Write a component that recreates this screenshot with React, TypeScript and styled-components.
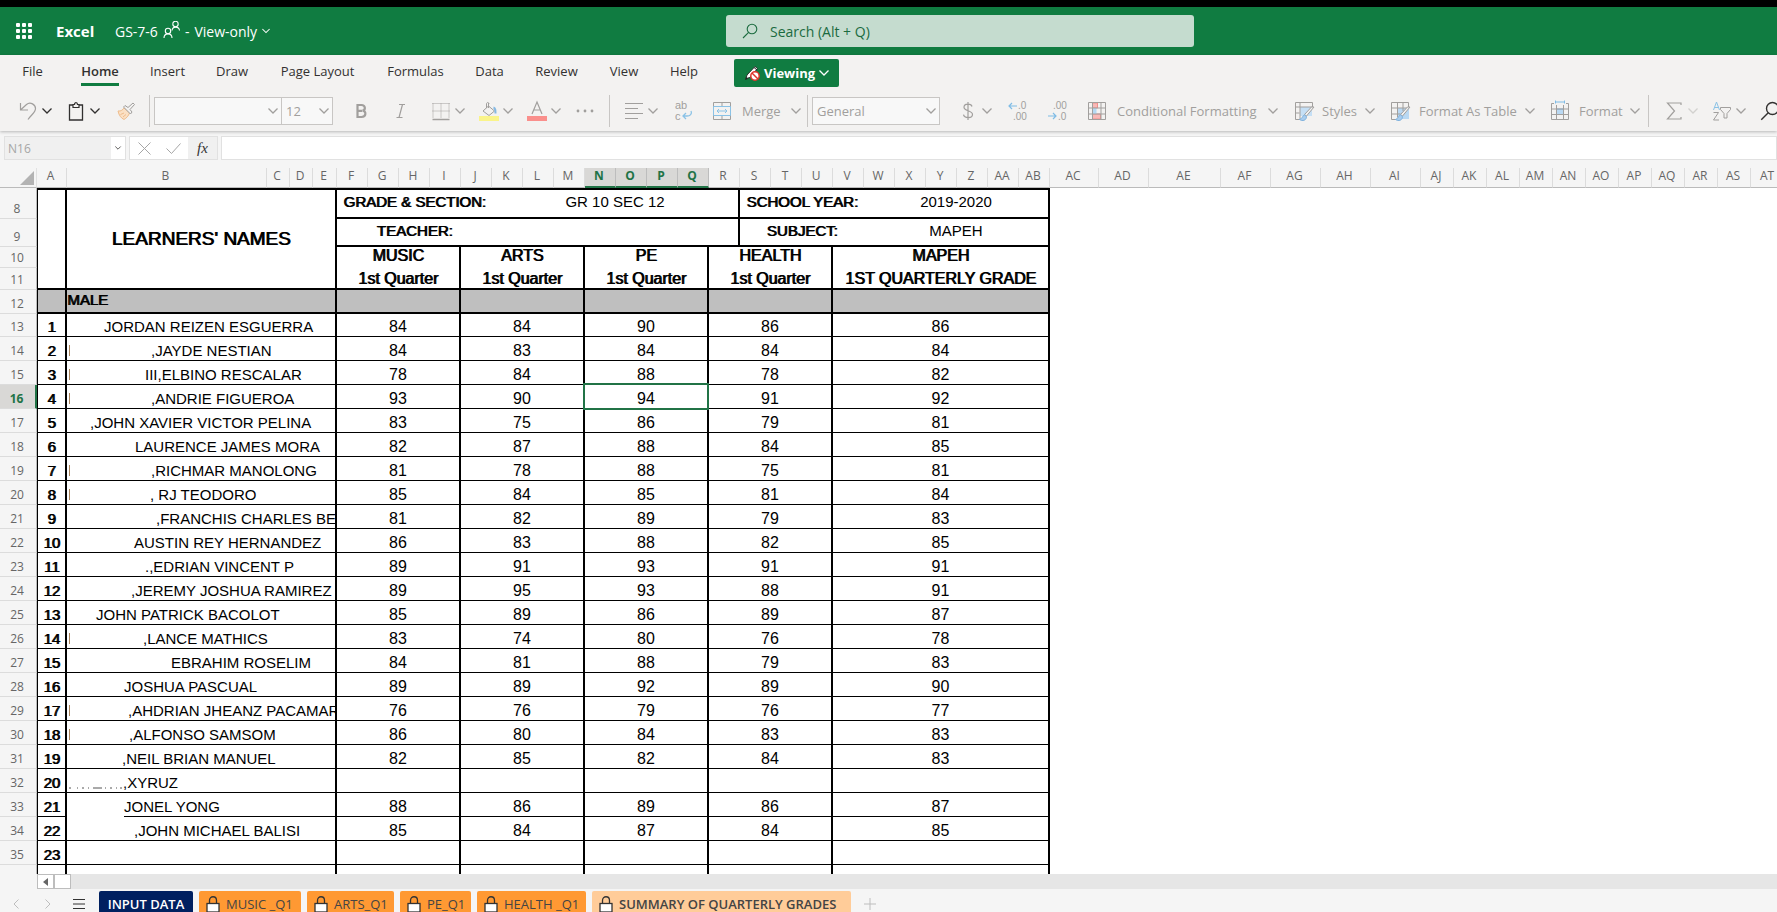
import React from 'react';
import styled, { createGlobalStyle, css } from 'styled-components';

const ui = '"Open Sans", "Noto Sans", sans-serif';
const sheet = '"Liberation Sans", Arial, sans-serif';
const green = '#107c41';
const selectGreen = '#217346';
const dim = '#a19f9d';

const GlobalStyle = createGlobalStyle`
  * { box-sizing: border-box; }
  body { margin: 0; background: #fff; font-family: ${ui}; font-size: 13px; overflow: hidden; }
  button, input, select { font: inherit; color: inherit; margin: 0; padding: 0; border: 0; background: none; border-radius: 0; }
  svg { display: block; flex: none; overflow: visible; }
`;

const Page = styled.div`
  display: flex;
  flex-direction: column;
  height: 100vh;
  overflow: hidden;
  background: #f5f5f5;
`;

/* ---------- title bar ---------- */

const TitleBar = styled.header`
  display: flex;
  flex: none;
  align-items: center;
  height: 55px;
  border-top: 7px solid #000;
  background: ${green};
  color: #fff;
  font-size: 14px;
`;

const TitleLeft = styled.div`
  display: flex;
  flex: 0 1 726px;
  align-items: center;
  white-space: nowrap;
  overflow: hidden;
`;

const Launcher = styled.button`
  display: flex;
  justify-content: center;
  width: 47px;
`;

const AppName = styled.span`
  width: 59px;
  padding-left: 9px;
  margin-right: 9px;
  font-size: 15px;
  font-weight: 700;
`;

const DocName = styled.button`
  display: flex;
  align-items: center;
  gap: 5px;
`;

const SearchBox = styled.label`
  display: flex;
  flex: 0 1 468px;
  align-items: center;
  gap: 12px;
  height: 32px;
  padding: 0 16px;
  border-radius: 3px;
  background: #c5dccf;
  color: #1b6b3f;
`;

const SearchInput = styled.input`
  flex: 1;
  min-width: 0;
  outline: 0;
  &::placeholder { color: #1b6b3f; opacity: 1; }
`;

/* ---------- ribbon ---------- */

const Ribbon = styled.div`
  flex: none;
  height: 76px;
  background: #f3f2f1;
  box-shadow: 0 1px 3px rgba(0, 0, 0, 0.25);
`;

const RibbonTabs = styled.nav`
  display: flex;
  align-items: center;
  height: 34px;
  color: #323130;
`;

const RibbonTab = styled.button<{ $w: number; $active?: boolean }>`
  display: flex;
  flex: none;
  justify-content: center;
  width: ${(p) => p.$w}px;
  height: 34px;
  span {
    height: 31px;
    padding-top: 7px;
    line-height: 18px;
    white-space: nowrap;
    border-bottom: 3px solid ${(p) => (p.$active ? green : 'transparent')};
    font-weight: ${(p) => (p.$active ? 600 : 400)};
  }
`;

const ViewingButton = styled.button`
  display: flex;
  flex: none;
  align-items: center;
  align-self: flex-start;
  gap: 4px;
  width: 105px;
  height: 28px;
  margin: 4px 0 0 20px;
  padding-left: 10px;
  border-radius: 2px;
  background: ${green};
  color: #fff;
  font-weight: 700;
`;

const Toolbar = styled.div`
  display: flex;
  align-items: center;
  height: 42px;
  padding-top: 2px;
  overflow: hidden;
  color: ${dim};
  white-space: nowrap;
`;

const Tool = styled.button<{ $ml: number; $gap?: number; $dark?: boolean }>`
  display: flex;
  flex: none;
  align-items: center;
  height: 32px;
  gap: ${(p) => p.$gap ?? 4}px;
  margin-left: ${(p) => p.$ml}px;
  color: ${(p) => (p.$dark ? '#323130' : dim)};
`;

const ToolLabel = styled.span<{ $w: number }>`
  width: ${(p) => p.$w}px;
  margin-right: 3px;
  text-align: left;
`;

const Divider = styled.span<{ $ml: number }>`
  flex: none;
  width: 1px;
  height: 32px;
  margin-left: ${(p) => p.$ml}px;
  background: #c8c6c4;
`;

const Picker = styled.span<{ $w: number; $ml: number }>`
  display: grid;
  flex: none;
  align-items: center;
  width: ${(p) => p.$w}px;
  height: 28px;
  margin-left: ${(p) => p.$ml}px;
  border: 1px solid #c8c6c4;
  background: #f8f8f8;
  > * { grid-area: 1 / 1; }
  > svg { justify-self: end; margin-right: 3px; pointer-events: none; }
`;

const PickerSelect = styled.select`
  appearance: none;
  width: 100%;
  height: 100%;
  padding-left: 4px;
  outline: 0;
`;

/* ---------- formula bar ---------- */

const FormulaRow = styled.div`
  display: flex;
  flex: none;
  gap: 3px;
  height: 37px;
  padding: 5px 0 8px 4px;
`;

const Framed = styled.div<{ $w?: number }>`
  display: flex;
  flex: ${(p) => (p.$w ? 'none' : '1')};
  width: ${(p) => (p.$w ? `${p.$w}px` : 'auto')};
  border: 1px solid #e1e1e1;
  background: #fff;
`;

const NameBox = styled.input`
  flex: 1;
  min-width: 0;
  padding: 0 3px;
  background: #f0f0f0;
  color: #a6a6a6;
  font-size: 12px;
  outline: 0;
`;

const BarButton = styled.button<{ $w: number; $shade?: boolean; $dark?: boolean }>`
  display: flex;
  align-items: center;
  justify-content: center;
  width: ${(p) => p.$w}px;
  color: ${(p) => (p.$dark ? '#323130' : '#a6a6a6')};
  background: ${(p) => (p.$shade ? '#f0f0f0' : '#fff')};
`;

const FxText = styled.i`
  color: #333;
  font-family: "Liberation Serif", serif;
  font-size: 15px;
`;

const FormulaInput = styled.input`
  flex: 1;
  min-width: 0;
  padding: 0 6px;
  outline: 0;
`;

/* ---------- grid ---------- */

const GridArea = styled.main`
  flex: 1;
  min-height: 0;
  overflow: hidden;
  background: linear-gradient(90deg, #f5f5f5 37px, #fff 37px);
`;

const Grid = styled.table`
  table-layout: fixed;
  width: 100%;
  min-width: 1784px;
  border-collapse: separate;
  border-spacing: 0;
  font-family: ${sheet};
  color: #000;
  td, th { padding: 0; }
`;

const Corner = styled.th`
  height: 20px;
  background: #f5f5f5;
  border-bottom: 1px solid #bbb;
  border-right: 1px solid #e1e1e1;
  svg { margin: 0 2px 0 auto; }
`;

const ColHead = styled.th<{ $sel?: boolean }>`
  height: 20px;
  border-right: 1px solid ${(p) => (p.$sel ? '#bdbdbd' : '#dcdcdc')};
  border-bottom: ${(p) => (p.$sel ? `2px solid ${selectGreen}` : '1px solid #bbb')};
  background: ${(p) => (p.$sel ? '#d9d8d6' : '#f5f5f5')};
  color: ${(p) => (p.$sel ? selectGreen : '#666')};
  font: ${(p) => (p.$sel ? 700 : 400)} 12px/16px ${ui};
  text-align: center;
  vertical-align: top;
  white-space: nowrap;
  && { padding-right: 2px; }
`;

/* The last column takes the rest of the window; its letter stays at the left. */
const LastLetter = styled.span`
  display: block;
  width: 32px;
`;

const RowHead = styled.th<{ $sel?: boolean }>`
  border-right: ${(p) => (p.$sel ? `2px solid ${selectGreen}` : '1px solid #bbb')};
  border-bottom: 1px solid #dcdcdc;
  background: ${(p) => (p.$sel ? '#d9d8d6' : '#f5f5f5')};
  color: ${(p) => (p.$sel ? selectGreen : '#666')};
  font: ${(p) => (p.$sel ? 700 : 400)} 12px/18px ${ui};
  text-align: center;
  vertical-align: bottom;
  && { padding-right: 2px; }
`;

const Row = styled.tr<{ $h: number }>`
  height: ${(p) => p.$h}px;
`;

type CellProps = {
  $line?: number;
  $right?: number;
  $top?: number;
  $left?: number;
  $heavy?: boolean;
  $size?: number;
  $middle?: boolean;
  $raised?: boolean;
  $shade?: boolean;
  $start?: boolean;
  $sel?: boolean;
};

const Cell = styled.td<CellProps>`
  position: relative;
  border: 0 solid #000;
  border-top-width: ${(p) => p.$top ?? 0}px;
  border-left-width: ${(p) => p.$left ?? 0}px;
  border-right-width: ${(p) => p.$right ?? 2}px;
  border-bottom-width: ${(p) => p.$line ?? 1}px;
  background: ${(p) => (p.$shade ? '#bfbfbf' : '#fff')};
  font-size: ${(p) => p.$size ?? 16}px;
  line-height: 18px;
  text-align: ${(p) => (p.$start ? 'left' : 'center')};
  vertical-align: ${(p) => (p.$middle || p.$raised ? 'middle' : 'bottom')};
  white-space: nowrap;
  ${(p) => p.$raised && css`&& { padding-bottom: 3px; }`}
  ${(p) => p.$heavy && css`text-shadow: 1px 0 0 #000;`}
  ${(p) =>
    p.$sel &&
    css`
      &::after {
        content: '';
        position: absolute;
        inset: -2px;
        z-index: 1;
        border: 2px solid ${selectGreen};
      }
    `}
`;

const NameText = styled.div<{ $indent: number }>`
  display: flex;
  height: 18px;
  overflow: hidden;
  span { margin-left: ${(p) => p.$indent}px; }
`;

const Mark = styled.i`
  flex: none;
  width: 1px;
  height: 11px;
  margin: 3px -3px 0 2px;
  background: #a9835c;
`;

/* Leftover baseline strokes in front of the name in row 32. */
const Strokes = styled.svg`
  position: absolute;
  left: 2px;
  bottom: 3px;
`;

/* Gap in the rule under row 33. */
const RuleGap = styled.i`
  position: absolute;
  left: 0;
  bottom: -1px;
  width: 57px;
  height: 1px;
  background: #fff;
`;

const Blank = styled.td``;

/* ---------- bottom bars ---------- */

const ScrollRow = styled.div`
  display: flex;
  flex: none;
  height: 15px;
  margin-left: 37px;
  background: #e6e6e6;
`;

const ScrollPart = styled.button`
  display: flex;
  align-items: center;
  justify-content: center;
  width: 17px;
  border: 1px solid #bdbdbd;
  background: #fff;
`;

const SheetTabs = styled.footer`
  display: flex;
  flex: none;
  gap: 6px;
  height: 23px;
  padding-top: 2px;
  overflow: hidden;
`;

const NavGroup = styled.div`
  display: flex;
  flex: none;
  align-items: center;
  width: 93px;
  height: 26px;
`;

const NavButton = styled.button<{ $w: number; $dark?: boolean }>`
  display: flex;
  justify-content: center;
  width: ${(p) => p.$w}px;
  color: ${(p) => (p.$dark ? '#333' : '#bdbdbd')};
`;

const SheetTab = styled.button<{ $w: number; $bg: string; $fg: string; $bold?: boolean; $locked?: boolean }>`
  display: flex;
  flex: none;
  align-items: center;
  justify-content: ${(p) => (p.$locked ? 'flex-start' : 'center')};
  gap: 6px;
  width: ${(p) => p.$w}px;
  height: 26px;
  padding-left: ${(p) => (p.$locked ? 7 : 0)}px;
  border-radius: 2px 2px 0 0;
  background: ${(p) => p.$bg};
  color: ${(p) => p.$fg};
  font-weight: ${(p) => (p.$bold ? 600 : 400)};
  white-space: nowrap;
`;

/* ---------- icons ---------- */

const Chevron = ({ w = 10, faint = false, dark = false }: { w?: number; faint?: boolean; dark?: boolean }) => (
  <svg
    width={w}
    height="6"
    viewBox="0 0 10 6"
    fill="none"
    stroke={dark ? '#323130' : 'currentColor'}
    strokeWidth="1.3"
    opacity={faint ? 0.4 : 1}
  >
    <path d="M.5.5 5 5 9.500.5" />
  </svg>
);

const Icon = ({ children, size = 20 }: { children: React.ReactNode; size?: number }) => (
  <svg width={size} height={size} viewBox="0 0 20 20" fill="none" stroke="currentColor" strokeWidth="1">
    {children}
  </svg>
);

const Waffle = () => (
  <svg width="16" height="16" viewBox="0 0 16 16" fill="#fff">
    {[0, 6, 12].map((y) => [0, 6, 12].map((x) => <rect key={`${x}-${y}`} x={x} y={y} width="4" height="4" rx="1" />))}
  </svg>
);

const People = () => (
  <svg width="17" height="20" viewBox="0 0 17 20" fill="none" stroke="#fff" strokeWidth="1.1">
    <circle cx="5" cy="10" r="2.7" />
    <path d="M1 17c0-5.500 8-5.500 8 0" />
    <circle cx="12.500" cy="3" r="2.7" />
    <path d="M9 9.500c.5-4.500 7-4.500 7.500 0" />
  </svg>
);

const Magnifier = ({ size = 16 }: { size?: number }) => (
  <svg width={size} height={size} viewBox="0 0 16 16" fill="none" stroke="currentColor" strokeWidth="1.1">
    <circle cx="10" cy="6" r="4.8" />
    <path d="M6.600 9.400 1 15" />
  </svg>
);

const PencilOff = () => (
  <svg width="16" height="16" viewBox="0 0 16 16" fill="none">
    <path d="M2 13.500 3 10l8-8.500 2.500 2L6 12.500z" fill="#fff" stroke="#222" strokeWidth=".9" />
    <path d="M1 15 2 12l2 2z" fill="#222" />
    <path d="m10 2.500 3 2.500" stroke="#222" />
    <circle cx="11" cy="11" r="4.2" fill="#fff" stroke="#e0342b" strokeWidth="1.5" />
    <path d="m8 8 6 6" stroke="#e0342b" strokeWidth="1.5" />
  </svg>
);

const Lock = () => (
  <svg width="14" height="17" viewBox="0 0 14 17" fill="none" stroke="#333" strokeWidth="1.3">
    <path d="M3.500 7.500V4.500c0-5 7-5 7 0v3" />
    <rect x="1" y="7.5" width="12" height="8.5" fill="#fff" />
  </svg>
);

const brush = (
  <>
    <path d="m20 6-7.500 9-2-1.500L17.500 6z" fill="#f3f2f1" />
    <path d="M10.500 14c-2 0-1.500 3.500-5 4.500 3 2 7 1 7-3z" fill="#a9cdee" stroke="#7fb2de" />
  </>
);

const UndoIcon = () => <Icon><path d="M2.500 2v7H10M2.500 9l6-5.500c4-3.500 9 .5 9 4 0 4-4 6-7.500 11" strokeWidth="1.2" /></Icon>;
const ClipIcon = () => (
  <Icon><path d="M7 4H3.500v15h13V4H13" strokeWidth="1.3" /><path d="M7 6.500V3.500h1.500c0-2.600 3-2.600 3 0H13v3z" strokeWidth="1.2" /></Icon>
);
const PainterIcon = () => (
  <Icon>
    <path d="M2 10c3 .5 5-1.500 6-3l5.500 5c-1 3-3 5-5.500 6.500-3-1.500-5-4-6-8.500z" fill="#fbe0c4" stroke="#efbd8c" />
    <path d="M4.500 13.500 8 12M7 16l3-2.500" stroke="#efbd8c" />
    <path d="m7.500 6 1.500-1.500 3 2 5-4.500 1.500 1.500-4.500 5 2 2.500-1.500 2z" fill="#f3f2f1" />
  </Icon>
);
const BoldIcon = () => <Icon><path d="M6.500 4v12h4c5 0 5-6 1-6.300C15 9 14.500 4 10.500 4zM6.500 9.800h4.500" strokeWidth="2.2" /></Icon>;
const ItalicIcon = () => <Icon><path d="M8 3.500h6M5.500 16.500h6M11.500 3.500l-3.500 13" strokeWidth="1.2" /></Icon>;
const BordersIcon = () => (
  <Icon><path d="M1.500 2.500h17M1.500 10h17M2 2.500V17M10 2.500V17M18 2.500V17" strokeDasharray="1 1" /><path d="M1.500 18.500h17" strokeWidth="1.5" /></Icon>
);
const FillIcon = () => (
  <Icon>
    <path d="M0 17.500h20" stroke="#faf48a" strokeWidth="5" />
    <path d="M9.500 2v5M9.500 5l6 5-5.500 4.500L4 10z M7.500 7V3c0-2 2.500-2 2.500 0" />
    <path d="M14.500 6.500c2 .5 2 2.500 2 6" stroke="#86b9e3" strokeWidth="2" />
  </Icon>
);
const FontColorIcon = () => (
  <Icon><path d="M0 17.500h20" stroke="#fa8f8c" strokeWidth="5" /><path d="M5 13 10 1l5 12M6.700 9h6.600" strokeWidth="1.2" /></Icon>
);
const DotsIcon = () => (
  <Icon><g fill="currentColor" stroke="none"><circle cx="3" cy="10" r="1.4" /><circle cx="10" cy="10" r="1.4" /><circle cx="17" cy="10" r="1.4" /></g></Icon>
);
const AlignIcon = () => <Icon><path d="M1 2.500h18M1 7.500h13M1 12.500h18M1 17.500h13" strokeWidth="1.2" /></Icon>;
const WrapIcon = () => (
  <svg width="20" height="22" viewBox="0 0 20 22" fill="none">
    <text x="1" y="9" fill="currentColor" fontSize="11" fontFamily={sheet}>ab</text>
    <text x="1" y="20" fill="currentColor" fontSize="11" fontFamily={sheet}>c</text>
    <path d="M17 11c1.500 3-1 5-4 5H9m3-3-3 3 3 3" stroke="#8ac2e6" strokeWidth="1.3" />
  </svg>
);
const MergeIcon = () => (
  <Icon>
    <path d="M1.500 1.500h17v17h-17zM10 1.500v4M10 14.500v4" />
    <path d="M1.500 5.500h17v9h-17zM5 10h10M7 8l-2 2 2 2M13 8l2 2-2 2" stroke="#8ac2e6" />
  </Icon>
);
const DollarIcon = () => <Icon><path d="M10 1v18M14 5.500C13 2 6 2.500 6 6.200c0 4.300 8.500 2.800 8.500 7.300 0 4.200-8.300 4-9 .2" strokeWidth="1.2" /></Icon>;
const Decimals = ({ more }: { more?: boolean }) => (
  <svg width="20" height="22" viewBox="0 0 20 22" fill="none">
    <text x={more ? 10 : 5} y="9" fill="currentColor" fontSize="10" fontFamily={sheet}>{more ? '.0' : '.00'}</text>
    <text x={more ? 5 : 10} y="20" fill="currentColor" fontSize="10" fontFamily={sheet}>{more ? '.00' : '.0'}</text>
    <path d={more ? 'M9 6H1m3-3L1 6l3 3' : 'M0 16h8m-3-3 3 3-3 3'} stroke="#7fbce6" strokeWidth="1.2" />
  </svg>
);
const CondIcon = () => (
  <Icon>
    <path d="M5.500 2h5v5h-5zM5.500 13h8v5h-8z" fill="#f8b9b7" stroke="#f08f8c" />
    <path d="M5.500 7h4v6h-4z" fill="#b5d9f2" stroke="none" />
    <path d="M1.500 1.500h17v17h-17zM1.500 7h17M1.500 13h17M5.500 1.500v17M14 1.500v17" />
  </Icon>
);
const StylesIcon = () => (
  <Icon><path d="M6 6h12v9H6z" fill="#c5dff5" stroke="none" /><path d="M18.500 6V1.500h-17v17h5M1.500 6h17M6 1.500v17M1.500 12h4" />{brush}</Icon>
);
const TableIcon = () => (
  <Icon><path d="M8 7h11v11H8z" fill="#b9d8f2" stroke="none" /><path d="M18.500 6V1.500h-17v17h5M1.500 7h17M1.500 13h9M7.500 1.500v15M13 1.500V10" />{brush}</Icon>
);
const FormatIcon = () => (
  <Icon>
    <path d="M6.500 8h7v5.500h-7z" fill="#b9d8f2" stroke="#7fb2de" />
    <path d="M4 2.500H1.500v16h17v-16H16M1.500 8h17M1.500 13.500h17M6.500 4v14.500M13.500 4v14.500" />
    <path d="M5.500 1h9M5.500-.5v3M14.500-.5v3" stroke="#7fbce6" />
  </Icon>
);
const SumIcon = () => <Icon><path d="M17 4V2H3.500l7 8-7 8H17v-2" strokeWidth="1.2" /></Icon>;
const SortIcon = () => (
  <Icon>
    <path d="M1.500 9 4.500 1l3 8M2.500 6.500h4" stroke="#8ac2e6" />
    <path d="M1.500 11.500h5l-5 7.500h5.500M8.500 6.500h10v2l-3.500 4V17h-3v-4.500l-3.500-4z" />
  </Icon>
);

/* ---------- data ---------- */

const ribbonTabs: [string, number][] = [
  ['File', 65], ['Home', 70], ['Insert', 65], ['Draw', 64], ['Page Layout', 107],
  ['Formulas', 89], ['Data', 59], ['Review', 75], ['View', 60], ['Help', 60],
];

const columns: [string, number][] = [
  ['A', 30], ['B', 200], ['C', 23], ['D', 23], ['E', 24],
  ...'FGHIJKLMNOPQRSTUVWXYZ'.split('').map((c): [string, number] => [c, 31]),
  ['AA', 31], ['AB', 31], ['AC', 49], ['AD', 50], ['AE', 72],
  ['AF', 50], ['AG', 50], ['AH', 50], ['AI', 50],
  ...['AJ', 'AK', 'AL', 'AM', 'AN', 'AO', 'AP', 'AQ', 'AR', 'AS'].map((c): [string, number] => [c, 33]),
];

const subjects = ['MUSIC', 'ARTS', 'PE', 'HEALTH'];
const restSpan = 18;

type Learner = { name: string; indent: number; mark?: boolean; grades?: number[]; strokes?: boolean; openBelow?: boolean };

const learners: Learner[] = [
  { name: 'JORDAN REIZEN ESGUERRA', indent: 37, grades: [84, 84, 90, 86, 86] },
  { name: ',JAYDE NESTIAN', indent: 84, mark: true, grades: [84, 83, 84, 84, 84] },
  { name: 'III,ELBINO RESCALAR', indent: 78, mark: true, grades: [78, 84, 88, 78, 82] },
  { name: ',ANDRIE FIGUEROA', indent: 84, mark: true, grades: [93, 90, 94, 91, 92] },
  { name: ',JOHN XAVIER VICTOR PELINA', indent: 23, grades: [83, 75, 86, 79, 81] },
  { name: 'LAURENCE JAMES MORA', indent: 68, grades: [82, 87, 88, 84, 85] },
  { name: ',RICHMAR MANOLONG', indent: 84, mark: true, grades: [81, 78, 88, 75, 81] },
  { name: ', RJ TEODORO', indent: 83, mark: true, grades: [85, 84, 85, 81, 84] },
  { name: ',FRANCHIS CHARLES BE', indent: 89, grades: [81, 82, 89, 79, 83] },
  { name: 'AUSTIN REY HERNANDEZ', indent: 67, grades: [86, 83, 88, 82, 85] },
  { name: '.,EDRIAN VINCENT P', indent: 78, grades: [89, 91, 93, 91, 91] },
  { name: ',JEREMY JOSHUA RAMIREZ', indent: 64, grades: [89, 95, 93, 88, 91] },
  { name: 'JOHN PATRICK BACOLOT', indent: 29, grades: [85, 89, 86, 89, 87] },
  { name: ',LANCE MATHICS', indent: 76, mark: true, grades: [83, 74, 80, 76, 78] },
  { name: 'EBRAHIM ROSELIM', indent: 104, grades: [84, 81, 88, 79, 83] },
  { name: 'JOSHUA PASCUAL', indent: 57, grades: [89, 89, 92, 89, 90] },
  { name: ',AHDRIAN JHEANZ PACAMAR', indent: 61, mark: true, grades: [76, 76, 79, 76, 77] },
  { name: ',ALFONSO SAMSOM', indent: 62, mark: true, grades: [86, 80, 84, 83, 83] },
  { name: ',NEIL BRIAN MANUEL', indent: 55, grades: [82, 85, 82, 84, 83] },
  { name: ',XYRUZ', indent: 56, strokes: true },
  { name: 'JONEL YONG', indent: 57, grades: [88, 86, 89, 86, 87], openBelow: true },
  { name: ',JOHN MICHAEL BALISI', indent: 67, grades: [85, 84, 87, 84, 85] },
  { name: '', indent: 0 },
  { name: '', indent: 0 },
];

const sheetTabs = [
  { label: 'INPUT DATA', w: 94, bg: '#002060', fg: '#fff', bold: true },
  { label: 'MUSIC _Q1', w: 102, bg: '#ff9933', fg: '#444', lock: true },
  { label: 'ARTS_Q1', w: 87, bg: '#ff9933', fg: '#444', lock: true },
  { label: 'PE_Q1', w: 71, bg: '#ff9933', fg: '#444', lock: true },
  { label: 'HEALTH _Q1', w: 109, bg: '#ff9933', fg: '#444', lock: true },
  { label: 'SUMMARY OF QUARTERLY GRADES', w: 259, bg: '#ffcc99', fg: '#444', lock: true, bold: true },
];

export default function App() {
  return (
    <Page>
      <GlobalStyle />
      <TitleBar>
        <TitleLeft>
          <Launcher aria-label="App launcher"><Waffle /></Launcher>
          <AppName>Excel</AppName>
          <DocName>
            <span>GS-7-6</span>
            <People />
            <span>-</span>
            <span>View-only</span>
            <Chevron w={8} />
          </DocName>
        </TitleLeft>
        <SearchBox>
          <Magnifier />
          <SearchInput aria-label="Search" placeholder="Search (Alt + Q)" />
        </SearchBox>
      </TitleBar>

      <Ribbon>
        <RibbonTabs>
          {ribbonTabs.map(([label, w]) => (
            <RibbonTab key={label} $w={w} $active={label === 'Home'}><span>{label}</span></RibbonTab>
          ))}
          <ViewingButton><PencilOff />Viewing<Chevron /></ViewingButton>
        </RibbonTabs>
        <Toolbar>
          <Tool $ml={18} aria-label="Undo"><UndoIcon /><Chevron dark /></Tool>
          <Tool $ml={14} $dark aria-label="Paste"><ClipIcon /><Chevron /></Tool>
          <Tool $ml={16} aria-label="Format painter"><PainterIcon /></Tool>
          <Divider $ml={13} />
          <Picker $w={128} $ml={4}>
            <PickerSelect aria-label="Font"><option></option></PickerSelect><Chevron />
          </Picker>
          <Picker $w={52} $ml={-1}>
            <PickerSelect aria-label="Font size"><option>12</option></PickerSelect><Chevron />
          </Picker>
          <Tool $ml={18} aria-label="Bold"><BoldIcon /></Tool>
          <Tool $ml={20} aria-label="Italic"><ItalicIcon /></Tool>
          <Tool $ml={20} aria-label="Borders"><BordersIcon /><Chevron /></Tool>
          <Tool $ml={14} aria-label="Fill colour"><FillIcon /><Chevron /></Tool>
          <Tool $ml={14} aria-label="Font colour"><FontColorIcon /><Chevron /></Tool>
          <Tool $ml={14} aria-label="More font options"><DotsIcon /></Tool>
          <Divider $ml={14} />
          <Tool $ml={14} aria-label="Align"><AlignIcon /><Chevron /></Tool>
          <Tool $ml={16} aria-label="Wrap text"><WrapIcon /></Tool>
          <Tool $ml={18} $gap={10}><MergeIcon /><ToolLabel $w={36}>Merge</ToolLabel><Chevron /></Tool>
          <Divider $ml={6} />
          <Picker $w={128} $ml={4}>
            <PickerSelect aria-label="Number format"><option>General</option></PickerSelect><Chevron />
          </Picker>
          <Tool $ml={18} aria-label="Currency"><DollarIcon /><Chevron /></Tool>
          <Tool $ml={16} aria-label="Increase decimals"><Decimals more /></Tool>
          <Tool $ml={20} aria-label="Decrease decimals"><Decimals /></Tool>
          <Tool $ml={19} $gap={10}><CondIcon /><ToolLabel $w={138}>Conditional Formatting</ToolLabel><Chevron /></Tool>
          <Tool $ml={16} $gap={8}><StylesIcon /><ToolLabel $w={32}>Styles</ToolLabel><Chevron /></Tool>
          <Tool $ml={15} $gap={9}><TableIcon /><ToolLabel $w={94}>Format As Table</ToolLabel><Chevron /></Tool>
          <Tool $ml={15} $gap={9}><FormatIcon /><ToolLabel $w={39}>Format</ToolLabel><Chevron /></Tool>
          <Divider $ml={8} />
          <Tool $ml={15} aria-label="AutoSum"><SumIcon /><Chevron faint /></Tool>
          <Tool $ml={14} aria-label="Sort and filter"><SortIcon /><Chevron /></Tool>
          <Tool $ml={14} $dark aria-label="Find"><Magnifier size={20} /></Tool>
        </Toolbar>
      </Ribbon>

      <FormulaRow>
        <Framed $w={122}>
          <NameBox aria-label="Name box" defaultValue="N16" />
          <BarButton $w={14} $dark aria-label="Named ranges"><Chevron w={6} /></BarButton>
        </Framed>
        <Framed $w={89}>
          <BarButton $w={29} aria-label="Cancel">
            <svg width="13" height="13" viewBox="0 0 13 13" stroke="currentColor"><path d="m.5.5 12 12m0-12-12 12" /></svg>
          </BarButton>
          <BarButton $w={29} aria-label="Enter">
            <svg width="15" height="11" viewBox="0 0 15 11" fill="none" stroke="currentColor"><path d="m.5 5.500 5 5 9-10" /></svg>
          </BarButton>
          <BarButton $w={29} $shade aria-label="Insert function"><FxText>fx</FxText></BarButton>
        </Framed>
        <Framed><FormulaInput aria-label="Formula" /></Framed>
      </FormulaRow>

      <GridArea>
        <Grid>
          <colgroup>
            <col style={{ width: 37 }} />
            {columns.map(([c, w]) => <col key={c} style={{ width: w }} />)}
            <col />
          </colgroup>
          <thead>
            <tr>
              <Corner aria-label="Select all">
                <svg width="14" height="14" viewBox="0 0 14 14"><path d="M14 0v14H0z" fill="#b3b3b3" /></svg>
              </Corner>
              {columns.map(([c]) => <ColHead key={c} scope="col" $sel={'NOPQ'.includes(c)}>{c}</ColHead>)}
              <ColHead scope="col"><LastLetter>AT</LastLetter></ColHead>
            </tr>
          </thead>
          <tbody>
            <Row $h={31}>
              <RowHead>8</RowHead>
              <Cell rowSpan={4} $top={2} $left={1} $line={2} />
              <Cell rowSpan={4} colSpan={4} $top={2} $line={2} $heavy $middle $size={19}>LEARNERS' NAMES</Cell>
              <Cell colSpan={5} $top={2} $right={0} $line={2} $heavy $raised $size={15}>GRADE &amp; SECTION:</Cell>
              <Cell colSpan={8} $top={2} $line={2} $raised $size={15}>GR 10 SEC 12</Cell>
              <Cell colSpan={4} $top={2} $right={0} $line={2} $heavy $raised $size={15}>SCHOOL YEAR:</Cell>
              <Cell colSpan={6} $top={2} $line={2} $raised $size={15}>2019-2020</Cell>
              <Blank colSpan={restSpan} />
            </Row>
            <Row $h={28}>
              <RowHead>9</RowHead>
              <Cell colSpan={5} $right={0} $line={2} $heavy $raised $size={15}>TEACHER:</Cell>
              <Cell colSpan={8} $line={2} />
              <Cell colSpan={4} $right={0} $line={2} $heavy $raised $size={15}>SUBJECT:</Cell>
              <Cell colSpan={6} $line={2} $raised $size={15}>MAPEH</Cell>
              <Blank colSpan={restSpan} />
            </Row>
            <Row $h={21}>
              <RowHead>10</RowHead>
              {subjects.map((s) => <Cell key={s} colSpan={4} $line={0} $heavy $raised>{s}</Cell>)}
              <Cell colSpan={7} $line={0} $heavy $raised>MAPEH</Cell>
              <Blank colSpan={restSpan} />
            </Row>
            <Row $h={22}>
              <RowHead>11</RowHead>
              {subjects.map((s) => <Cell key={s} colSpan={4} $line={2} $heavy>1st Quarter</Cell>)}
              <Cell colSpan={7} $line={2} $heavy>1ST QUARTERLY GRADE</Cell>
              <Blank colSpan={restSpan} />
            </Row>
            <Row $h={24}>
              <RowHead>12</RowHead>
              <Cell $left={1} $line={2} $shade />
              <Cell colSpan={4} $line={2} $shade $heavy $raised $start $size={15}>MALE</Cell>
              {subjects.map((s) => <Cell key={s} colSpan={4} $line={2} $shade />)}
              <Cell colSpan={7} $line={2} $shade />
              <Blank colSpan={restSpan} />
            </Row>
            {learners.map((l, i) => (
              <Row key={i} $h={i === 0 ? 23 : 24}>
                <RowHead $sel={i === 3}>{i + 13}</RowHead>
                <Cell $left={1} $heavy $size={15}>{i + 1}</Cell>
                <Cell colSpan={4} $start $size={15}>
                  <NameText $indent={l.indent}>{l.mark && <Mark />}<span>{l.name}</span></NameText>
                  {l.strokes && (
                    <Strokes width="54" height="2" viewBox="0 0 54 2">
                      <path d="M0 1h2M8 1h1M13 1h2M19 1h1M24 1h9M36 1h1M41 1h2M47 1h1M51 1h2" stroke="#555" />
                    </Strokes>
                  )}
                  {l.openBelow && <RuleGap />}
                </Cell>
                {subjects.map((s, n) => (
                  <Cell key={s} colSpan={4} $sel={i === 3 && n === 2}>{l.grades?.[n]}</Cell>
                ))}
                <Cell colSpan={7}>{l.grades?.[4]}</Cell>
                <Blank colSpan={restSpan} />
              </Row>
            ))}
          </tbody>
        </Grid>
      </GridArea>

      <ScrollRow>
        <ScrollPart aria-label="Scroll left">
          <svg width="5" height="8" viewBox="0 0 5 8"><path d="M5 0v8L0 4z" fill="#666" /></svg>
        </ScrollPart>
        <ScrollPart aria-label="Scroll handle" />
      </ScrollRow>

      <SheetTabs>
        <NavGroup>
          <NavButton $w={31} aria-label="Previous sheet">
            <svg width="6" height="10" viewBox="0 0 6 10" fill="none" stroke="currentColor"><path d="M5.500.5 1 5l4.500 4.500" /></svg>
          </NavButton>
          <NavButton $w={34} aria-label="Next sheet">
            <svg width="6" height="10" viewBox="0 0 6 10" fill="none" stroke="currentColor"><path d="M.5.5 5 5 .5 9.500" /></svg>
          </NavButton>
          <NavButton $w={28} $dark aria-label="All sheets">
            <svg width="12" height="10" viewBox="0 0 12 10" stroke="currentColor"><path d="M0 .5h12M0 5h12M0 9.500h12" /></svg>
          </NavButton>
        </NavGroup>
        {sheetTabs.map((t) => (
          <SheetTab key={t.label} $w={t.w} $bg={t.bg} $fg={t.fg} $bold={t.bold} $locked={t.lock}>
            {t.lock && <Lock />}
            {t.label}
          </SheetTab>
        ))}
        <NavButton $w={26} aria-label="New sheet">
          <svg width="12" height="26" viewBox="0 0 12 26" stroke="currentColor"><path d="M0 13h12M6 7v12" /></svg>
        </NavButton>
      </SheetTabs>
    </Page>
  );
}
